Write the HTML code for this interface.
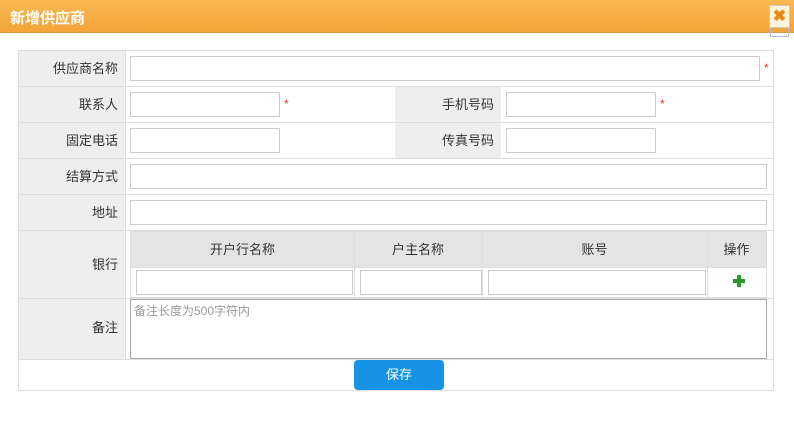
<!DOCTYPE html>
<html><head><meta charset="utf-8"><style>
body{margin:0;width:794px;height:422px;background:#fff;position:relative;overflow:hidden;font-family:"Liberation Sans","Noto Sans CJK SC",sans-serif;font-size:13px;color:#333}
div{position:absolute;box-sizing:border-box}
.hd{left:0;top:0;width:794px;height:33px;background:linear-gradient(#f9b851,#f4a43a);border-bottom:1px solid #d89a45}
.tt{left:10px;top:7px;color:#fff;font-weight:bold;font-size:15px}
.g{background:#eee}
.l{text-align:right;padding-right:7px;line-height:36px}
.hl{background:#e4e4e4}
.v{background:#e4e4e4}
.in{border:1px solid #ccc;background:#fff}
.s{color:#e33;font-size:12px}
.c{text-align:center;line-height:36px}
</style></head><body>
<div class="hd"></div><div class="tt">新增供应商</div>
<div style="left:770px;top:28px;width:19px;height:9px;border:1px solid #b0bcd8;border-top:none"></div>
<div style="left:769px;top:5px;width:21px;height:23px;border:1px solid #ccb;background:#fdf3d8;color:#e88a10;font-weight:bold;font-size:16px;text-align:center;line-height:21px">✖</div>

<div style="left:18px;top:50px;width:756px;height:341px;border:1px solid #ddd"></div>
<div class="g" style="left:19px;top:51px;width:106px;height:308px"></div>
<div class="g" style="left:395px;top:87px;width:106px;height:71px"></div>
<!-- horizontal lines -->
<div style="left:19px;top:86px;width:754px;height:1px;background:#ddd"></div>
<div style="left:19px;top:122px;width:754px;height:1px;background:#ddd"></div>
<div style="left:19px;top:158px;width:754px;height:1px;background:#ddd"></div>
<div style="left:19px;top:194px;width:754px;height:1px;background:#ddd"></div>
<div style="left:19px;top:230px;width:754px;height:1px;background:#ddd"></div>
<div style="left:19px;top:298px;width:754px;height:1px;background:#ddd"></div>
<div style="left:19px;top:359px;width:754px;height:1px;background:#ddd"></div>
<div style="left:125px;top:51px;width:1px;height:308px;background:#ddd"></div>

<div class="l" style="left:19px;top:51px;width:106px">供应商名称</div>
<div class="l" style="left:19px;top:87px;width:106px">联系人</div>
<div class="l" style="left:19px;top:123px;width:106px">固定电话</div>
<div class="l" style="left:19px;top:159px;width:106px">结算方式</div>
<div class="l" style="left:19px;top:195px;width:106px">地址</div>
<div class="l" style="left:19px;top:247px;width:106px">银行</div>
<div class="l" style="left:19px;top:310px;width:106px">备注</div>
<div class="l" style="left:395px;top:87px;width:106px">手机号码</div>
<div class="l" style="left:395px;top:123px;width:106px">传真号码</div>

<div class="in" style="left:130px;top:56px;width:630px;height:25px"></div><div class="s" style="left:764px;top:61px">*</div>
<div class="in" style="left:130px;top:92px;width:150px;height:25px"></div><div class="s" style="left:284px;top:97px">*</div>
<div class="in" style="left:506px;top:92px;width:150px;height:25px"></div><div class="s" style="left:660px;top:97px">*</div>
<div class="in" style="left:130px;top:128px;width:150px;height:25px"></div>
<div class="in" style="left:506px;top:128px;width:150px;height:25px"></div>
<div class="in" style="left:130px;top:164px;width:637px;height:25px"></div>
<div class="in" style="left:130px;top:200px;width:637px;height:25px"></div>

<div style="left:130px;top:231px;width:637px;height:67px;border:1px solid #ddd"></div>
<div class="hl" style="left:131px;top:232px;width:635px;height:35px"></div>
<div style="left:131px;top:267px;width:635px;height:1px;background:#ddd"></div>
<div style="left:354px;top:232px;width:1px;height:65px;background:#ddd"></div>
<div style="left:482px;top:232px;width:1px;height:65px;background:#ddd"></div>
<div style="left:707px;top:232px;width:1px;height:65px;background:#ddd"></div>
<div class="c" style="left:131px;top:232px;width:223px">开户行名称</div>
<div class="c" style="left:354px;top:232px;width:128px">户主名称</div>
<div class="c" style="left:482px;top:232px;width:225px">账号</div>
<div class="c" style="left:707px;top:232px;width:59px">操作</div>
<div class="in" style="left:136px;top:270px;width:217px;height:25px"></div>
<div class="in" style="left:360px;top:270px;width:122px;height:25px"></div>
<div class="in" style="left:488px;top:270px;width:218px;height:25px"></div>
<div style="left:733px;top:279px;width:12px;height:4px;background:#2a9a2a"></div>
<div style="left:737px;top:275px;width:4px;height:12px;background:#2a9a2a"></div>

<div class="in" style="left:130px;top:299px;width:637px;height:60px;border-color:#aaa"></div>
<div style="left:134px;top:302px;color:#999;font-size:12px">备注长度为500字符内</div>

<div style="left:354px;top:360px;width:90px;height:30px;background:#1793e6;border-radius:4px;color:#fff;text-align:center;line-height:30px">保存</div>
</body></html>
